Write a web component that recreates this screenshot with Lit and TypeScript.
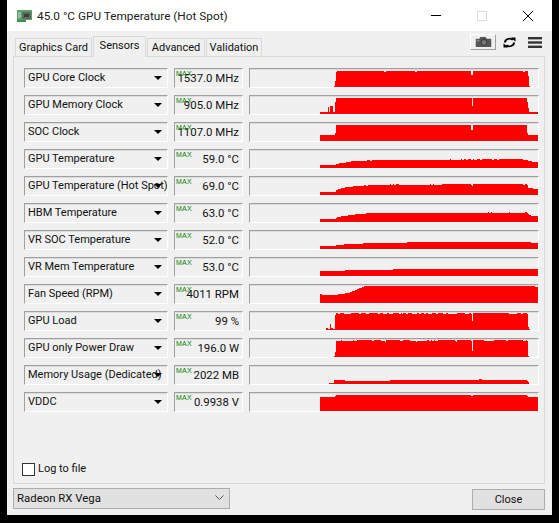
import { LitElement, html, css, svg } from "lit";
import { customElement } from "lit/decorators.js";

type Step = [number, number];

function spiky(x0: number, x1: number, base: number, ups: [number, number][], up: number, extra: [number, number, number][] = []): Step[] {
  const marks: [number, number, number][] = [
    ...ups.map(([a, b]) => [a, b, up] as [number, number, number]),
    ...extra,
  ].sort((p, q) => p[0] - q[0]);
  const out: Step[] = [];
  let x = x0;
  for (const [a, b, t] of marks) {
    if (a > x) out.push([x, base]);
    out.push([a, t]);
    x = b;
  }
  if (x < x1) out.push([x, base]);
  return out;
}

interface Row {
  name: string;
  value: string;
  steps: Step[];
  end: number;
}

const rows: Row[] = [
  { name: "GPU Core Clock", value: "1537.0 MHz", end: 530,
    steps: [[334,18],[335,13],[336,4],[337,3],[384,4],[386,3],[415,4],[417,3],[471,7],[473,3],[523,4],[525,3],[528,8],[529,18]] },
  { name: "GPU Memory Clock", value: "905.0 MHz", end: 538,
    steps: [[320,17],[328,12],[329,17],[330,11],[333,17],[335,7],[336,3],[472,11],[473,3],[527,7],[528,13],[529,17]] },
  { name: "SOC Clock", value: "1107.0 MHz", end: 538,
    steps: [[320,13],[335,11],[336,3],[471,8],[473,3],[527,11],[528,13]] },
  { name: "GPU Temperature", value: "59.0 °C", end: 538,
    steps: [[320,16],[336,15],[339,14],[346,13],[351,12],[367,11],[370,12],[372,11],[450,10],[451,11],[461,10],[462,11],[464,10],[466,11],[468,10],[471,11],[473,10],[474,11],[477,10],[480,11],[482,10],[492,11],[494,10],[497,11],[499,10],[523,11],[528,12],[532,13]] },
  { name: "GPU Temperature (Hot Spot)", value: "69.0 °C", end: 538,
    steps: [[320,16],[336,14],[338,13],[341,12],[345,11],[353,10],[364,9],[366,10],[368,9],[390,8],[391,9],[393,8],[394,9],[396,8],[399,9],[430,8],[431,9],[433,8],[434,9],[442,8],[471,9],[472,10],[473,8],[523,9],[525,8],[527,9],[528,12],[533,13]] },
  { name: "HBM Temperature", value: "63.0 °C", end: 538,
    steps: [[320,16],[336,15],[337,14],[341,13],[348,12],[355,11],[366,10],[488,9],[489,10],[491,9],[492,10],[509,9],[510,10],[525,9],[527,10],[528,11],[529,12],[531,13]] },
  { name: "VR SOC Temperature", value: "52.0 °C", end: 538,
    steps: [[320,16],[336,15],[344,14],[363,13],[407,12],[531,13]] },
  { name: "VR Mem Temperature", value: "53.0 °C", end: 538,
    steps: [[320,14],[345,13],[393,12]] },
  { name: "Fan Speed (RPM)", value: "4011 RPM", end: 538,
    steps: [[320,10],[322,11],[338,10],[345,9],[350,8],[352,7],[355,6],[357,5],[359,4],[362,3],[364,2],[535,3]] },
  { name: "GPU Load", value: "99 %", end: 530,
    steps: [[326,17],[328,18],[330,13],[331,17],[333,18],[335,4],
      ...spiky(336, 527, 3, [[336,338],[340,344],[351,359],[361,366],[369,378],[380,383],[387,389],[393,399],[401,402],[403,406],[408,412],[417,419],[421,424],[426,428],[432,436],[438,443],[446,448],[457,465],[469,471],[473,509],[517,521],[523,527]], 2, [[472,473,10]]),
      [527,3],[528,16],[529,18]] },
  { name: "GPU only Power Draw", value: "196.0 W", end: 529,
    steps: [[334,18],[335,14],
      ...spiky(336, 528, 3, [[341,342],[353,354],[357,372],[374,381],[386,400],[403,410],[427,429],[431,432],[434,435],[438,455],[457,471],[473,484],[494,506],[508,523],[526,527]], 2, [[385,386,4],[416,417,4],[456,457,4],[472,473,13]]),
      [528,18]] },
  { name: "Memory Usage (Dedicated)", value: "2022 MB", end: 529,
    steps: [[329,18],[334,15],[345,16],[390,15],[479,14],[482,15],[527,16],[528,17]] },
  { name: "VDDC", value: "0.9938 V", end: 538,
    steps: [[320,5],[335,4],[336,3],[471,4],[473,3],[527,4],[528,5]] },
];

function pathOf(r: Row): string {
  const X = 250, Y = 1, B = 18;
  let d = `M${r.steps[0][0] - X} ${B}`;
  r.steps.forEach(([x, t], i) => {
    const next = i + 1 < r.steps.length ? r.steps[i + 1][0] : r.end;
    d += `V${t - Y}H${next - X}`;
  });
  return d + `V${B}Z`;
}

@customElement("app-root")
export class AppRoot extends LitElement {
  static styles = css`
    :host {
      display: block;
      width: 559px;
      height: 523px;
      background: #000;
      font-family: "Roboto", "Liberation Sans", sans-serif;
      font-size: 11px;
      color: #111;
      overflow: hidden;
    }
    .window {
      margin-left: 7px;
      width: 545px;
      height: 515px;
      background: #f0f0f0;
      display: flex;
      flex-direction: column;
    }
    .title {
      height: 31px;
      background: #fff;
      display: flex;
      align-items: center;
      flex: none;
      position: relative;
    }
    .appicon { margin-left: 10px; width: 15px; height: 12px; flex: none; }
    .title-text { margin-left: 5px; font-size: 11.8px; color: #222; }
    .winbtns { margin-left: auto; display: flex; align-items: center; }
    .winbtns svg { display: block; width: 12px; height: 12px; }
    .b-min { margin-right: 34px; }
    .b-max { margin-right: 34px; }
    .b-close { margin-right: 18px; }
    .tabbar {
      height: 25px;
      flex: none;
      display: flex;
      align-items: flex-end;
      padding: 0 7px 0 8px;
      position: relative;
      z-index: 1;
    }
    .tab {
      height: 18px;
      border: 1px solid #d9d9d9;
      border-bottom: none;
      box-sizing: border-box;
      display: flex;
      align-items: center;
      justify-content: center;
      background: #f0f0f0;
      margin-right: 1px;
      white-space: nowrap;
    }
    .t1 { width: 77px; }
    .t2 {
      width: 53px;
      height: 21px;
      margin-bottom: -1px;
      padding-bottom: 3px;
    }
    .t3 { width: 58px; }
    .t4 { width: 56px; }
    .tools { margin-left: auto; display: flex; align-items: flex-start; height: 22px; }
    .cam {
      width: 26px;
      height: 16px;
      box-sizing: border-box;
      border: 1px solid #fff;
      border-right-color: #a0a0a0;
      border-bottom-color: #a0a0a0;
      display: flex;
      align-items: center;
      justify-content: center;
      margin-right: 7px;
    }
    .cam svg { width: 17px; height: 10px; display: block; }
    .refresh { width: 13px; height: 11px; display: block; margin: 3px 12px 0 0; }
    .menu { width: 14px; height: 11px; display: block; margin: 3px 3px 0 0; }
    .panel {
      margin: 0 7px 0 6px;
      height: 428px;
      flex: none;
      box-sizing: border-box;
      border: 1px solid #d9d9d9;
      padding: 11px 6px 7px 10px;
      display: flex;
      flex-direction: column;
      gap: 7px;
    }
    .row {
      display: grid;
      grid-template-columns: 144px 69px 290px;
      column-gap: 6px;
      height: 20px;
      flex: none;
    }
    .sunken {
      box-sizing: border-box;
      height: 20px;
      border-top: 1px solid #a0a0a0;
      border-left: 1px solid #a0a0a0;
      border-right: 1px solid #fff;
      border-bottom: 1px solid #fff;
      box-shadow: inset 0 1px 0 #dcdcdc;
      position: relative;
    }
    .name {
      display: flex;
      align-items: center;
      padding: 0 0 1px 3px;
      white-space: nowrap;
    }
    .arrow {
      position: absolute;
      right: 5px;
      top: 7px;
      width: 0;
      height: 0;
      border-left: 4px solid transparent;
      border-right: 4px solid transparent;
      border-top: 4px solid #000;
    }
    .value {
      display: flex;
      align-items: center;
      justify-content: flex-end;
      padding: 0 3px 1px 0;
      white-space: nowrap;
      font-size: 11.4px;
    }
    .max {
      position: absolute;
      left: 1px;
      top: 1px;
      font-family: "Liberation Sans", sans-serif;
      font-size: 7px;
      line-height: 7px;
      font-weight: 400;
      letter-spacing: 0.2px;
      color: #008000;
    }
    .graph svg { display: block; width: 288px; height: 18px; }
    .log {
      margin-top: auto;
      display: flex;
      align-items: center;
      gap: 3px;
      margin-left: -2px;
    }
    .log span { position: relative; top: -1px; }
    .check {
      width: 13px;
      height: 13px;
      box-sizing: border-box;
      border: 1px solid #333;
      background: #fff;
    }
    .footer {
      flex: 1;
      display: flex;
      justify-content: space-between;
      align-items: flex-start;
      padding: 4px 7px 0 6px;
    }
    .device {
      box-sizing: border-box;
      width: 217px;
      height: 21px;
      border: 1px solid #adadad;
      background: #e1e1e1;
      display: flex;
      align-items: center;
      justify-content: space-between;
      padding: 0 5px 1px 3px;
      font-size: 11.4px;
    }
    .device svg { width: 9px; height: 6px; display: block; }
    .close {
      box-sizing: border-box;
      width: 73px;
      height: 21px;
      margin-top: 1px;
      border: 1px solid #adadad;
      background: #e1e1e1;
      display: flex;
      align-items: center;
      justify-content: center;
    }
  `;

  render() {
    return html`
      <div class="window">
        <div class="title">
          <svg class="appicon" viewBox="0 0 15 12">
            <rect x="0" y="0" width="15" height="10" fill="#5f9f6e"></rect>
            <rect x="0" y="10" width="9" height="2" fill="#3e8f4e"></rect>
            <rect x="5" y="2" width="9" height="7" fill="#5a6a60"></rect>
            <rect x="1" y="2" width="3" height="6" fill="#8fc09a"></rect>
            <rect x="7" y="4" width="5" height="3" fill="#37423b"></rect>
          </svg>
          <span class="title-text">45.0 °C GPU Temperature (Hot Spot)</span>
          <div class="winbtns">
            <svg class="b-min" viewBox="0 0 12 12"><rect x="1" y="5" width="10" height="1" fill="#000"></rect></svg>
            <svg class="b-max" viewBox="0 0 12 12"><rect x="1.5" y="1.5" width="9" height="9" fill="none" stroke="#dcdcdc"></rect></svg>
            <svg class="b-close" viewBox="0 0 12 12"><path d="M1 1L11 11M11 1L1 11" stroke="#000" fill="none"></path></svg>
          </div>
        </div>
        <div class="tabbar">
          <div class="tab t1">Graphics Card</div>
          <div class="tab t2">Sensors</div>
          <div class="tab t3">Advanced</div>
          <div class="tab t4">Validation</div>
          <div class="tools">
            <div class="cam">
              <svg viewBox="0 0 17 11">
                <path d="M0 2H4L5 0H11L12 2H17V11H0Z" fill="#555"></path>
                <circle cx="9" cy="6" r="3.2" fill="#777" stroke="#333"></circle>
                <rect x="1" y="3" width="3" height="2" fill="#888"></rect>
              </svg>
            </div>
            <svg class="refresh" viewBox="0 0 13 13" preserveAspectRatio="none">
              <path d="M2 6.5A4.5 4.5 0 0 1 9.8 3.4" fill="none" stroke="#000" stroke-width="2"></path>
              <path d="M11 6.5A4.5 4.5 0 0 1 3.2 9.6" fill="none" stroke="#000" stroke-width="2"></path>
              <path d="M8 0.5H12.5V5.5Z" fill="#000"></path>
              <path d="M5 12.5H0.5V7.5Z" fill="#000"></path>
            </svg>
            <svg class="menu" viewBox="0 0 14 11">
              <rect x="0" y="0" width="14" height="2.4" fill="#333"></rect>
              <rect x="0" y="4.3" width="14" height="2.4" fill="#333"></rect>
              <rect x="0" y="8.6" width="14" height="2.4" fill="#333"></rect>
            </svg>
          </div>
        </div>
        <div class="panel">
          ${rows.map(
            (r) => html`
              <div class="row">
                <div class="sunken name"><span>${r.name}</span><i class="arrow"></i></div>
                <div class="sunken value"><b class="max">MAX</b>${r.value}</div>
                <div class="sunken graph">
                  <svg viewBox="0 0 288 18" shape-rendering="crispEdges">
                    ${svg`<path d=${pathOf(r)} fill="#ff0000"></path>`}
                  </svg>
                </div>
              </div>
            `
          )}
          <div class="log"><div class="check"></div><span>Log to file</span></div>
        </div>
        <div class="footer">
          <div class="device">
            <span>Radeon RX Vega</span>
            <svg viewBox="0 0 9 6"><path d="M0.5 0.5L4.5 4.5L8.5 0.5" fill="none" stroke="#555"></path></svg>
          </div>
          <div class="close">Close</div>
        </div>
      </div>
    `;
  }
}
